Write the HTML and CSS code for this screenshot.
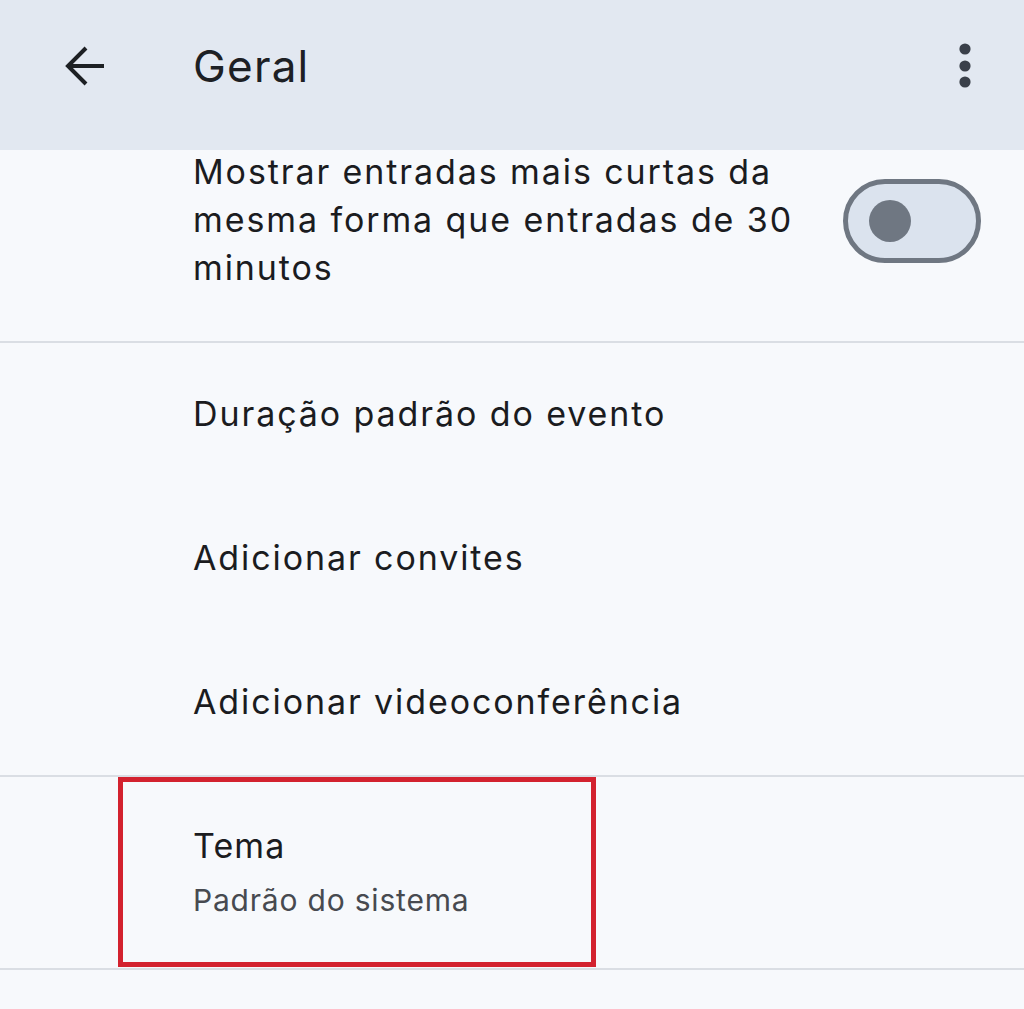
FILE: index.html
```html
<!DOCTYPE html>
<html lang="pt">
<head>
  <meta charset="UTF-8">
  <meta name="viewport" content="width=device-width, initial-scale=1.0">
  <title>Geral</title>
  <link rel="stylesheet" href="styles.css">
</head>
<body>

  <!-- Top bar -->
  <header class="topbar">
    <span class="icon-btn back">
      <svg width="48" height="48" viewBox="0 0 48 48"><path d="M42 24H7M24 6L6 24l18 18" fill="none" stroke="#1d2024" stroke-width="4"/></svg>
    </span>
    <h1 class="title">Geral</h1>
    <span class="icon-btn more">
      <svg width="14" height="48" viewBox="0 0 14 48"><circle cx="7" cy="7" r="5.6" fill="#3a404a"/><circle cx="7" cy="24" r="5.6" fill="#3a404a"/><circle cx="7" cy="40" r="5.6" fill="#3a404a"/></svg>
    </span>
  </header>

  <main class="settings">
    <div class="row toggle-row">
      <div class="label">Mostrar entradas mais curtas da mesma forma que entradas de 30 minutos</div>
      <div class="switch"><span class="knob"></span></div>
    </div>

    <div class="group">
      <div class="row item">Duração padrão do evento</div>
      <div class="row item">Adicionar convites</div>
      <div class="row item">Adicionar videoconferência</div>
    </div>

    <div class="group theme">
      <div class="row theme-row">
        <div class="label">Tema</div>
        <div class="sub">Padrão do sistema</div>
      </div>
      <div class="highlight"></div>
    </div>
  </main>

</body>
</html>
```

FILE: styles.css
```css
/* Reset and base styles */
* { margin: 0; padding: 0; box-sizing: border-box; }
body, html { width: 100%; height: 100%; font-family: Inter, Roboto, sans-serif; background: #f7f9fc; color: #1b1c1f; }

/* Top bar */
.topbar { height: 150px; background: #e2e8f1; display: flex; align-items: flex-start; padding: 42px 0 0 62px; }
.icon-btn { display: flex; align-items: center; justify-content: center; }
.back { width: 48px; height: 48px; }
.title { font-size: 44px; font-weight: 400; letter-spacing: 1.2px; margin-left: 83px; line-height: 48px; color: #1d2024; flex: 1; }
.more { margin-right: 52px; height: 48px; }

/* Settings list */
.settings { display: flex; flex-direction: column; }
.row { padding-left: 193px; font-size: 34px; letter-spacing: 1.9px; }
.toggle-row { display: flex; align-items: center; justify-content: space-between; padding-right: 43px; padding-bottom: 49px; border-bottom: 2px solid #dadee4; }
.toggle-row .label { line-height: 48px; width: 620px; margin-top: -2px; }

.switch { width: 138px; height: 84px; border: 5px solid #6f7782; border-radius: 42px; background: #dbe3ee; display: flex; align-items: center; padding-left: 21px; }
.knob { width: 42px; height: 42px; border-radius: 50%; background: #6f7782; }

.group { border-bottom: 2px solid #dadee4; }
.item { height: 144px; display: flex; align-items: center; padding-bottom: 4px; }

.theme { position: relative; height: 193px; }
.theme-row { padding-top: 46px; }
.theme-row .label { line-height: 46px; letter-spacing: 1.1px; }
.theme-row .sub { font-size: 30px; letter-spacing: 0.8px; line-height: 40px; margin-top: 11px; color: #474a50; }

/* Annotation box */
.highlight { position: absolute; left: 118px; top: 0; width: 478px; height: 190px; border: 5px solid #d3222f; }
```
